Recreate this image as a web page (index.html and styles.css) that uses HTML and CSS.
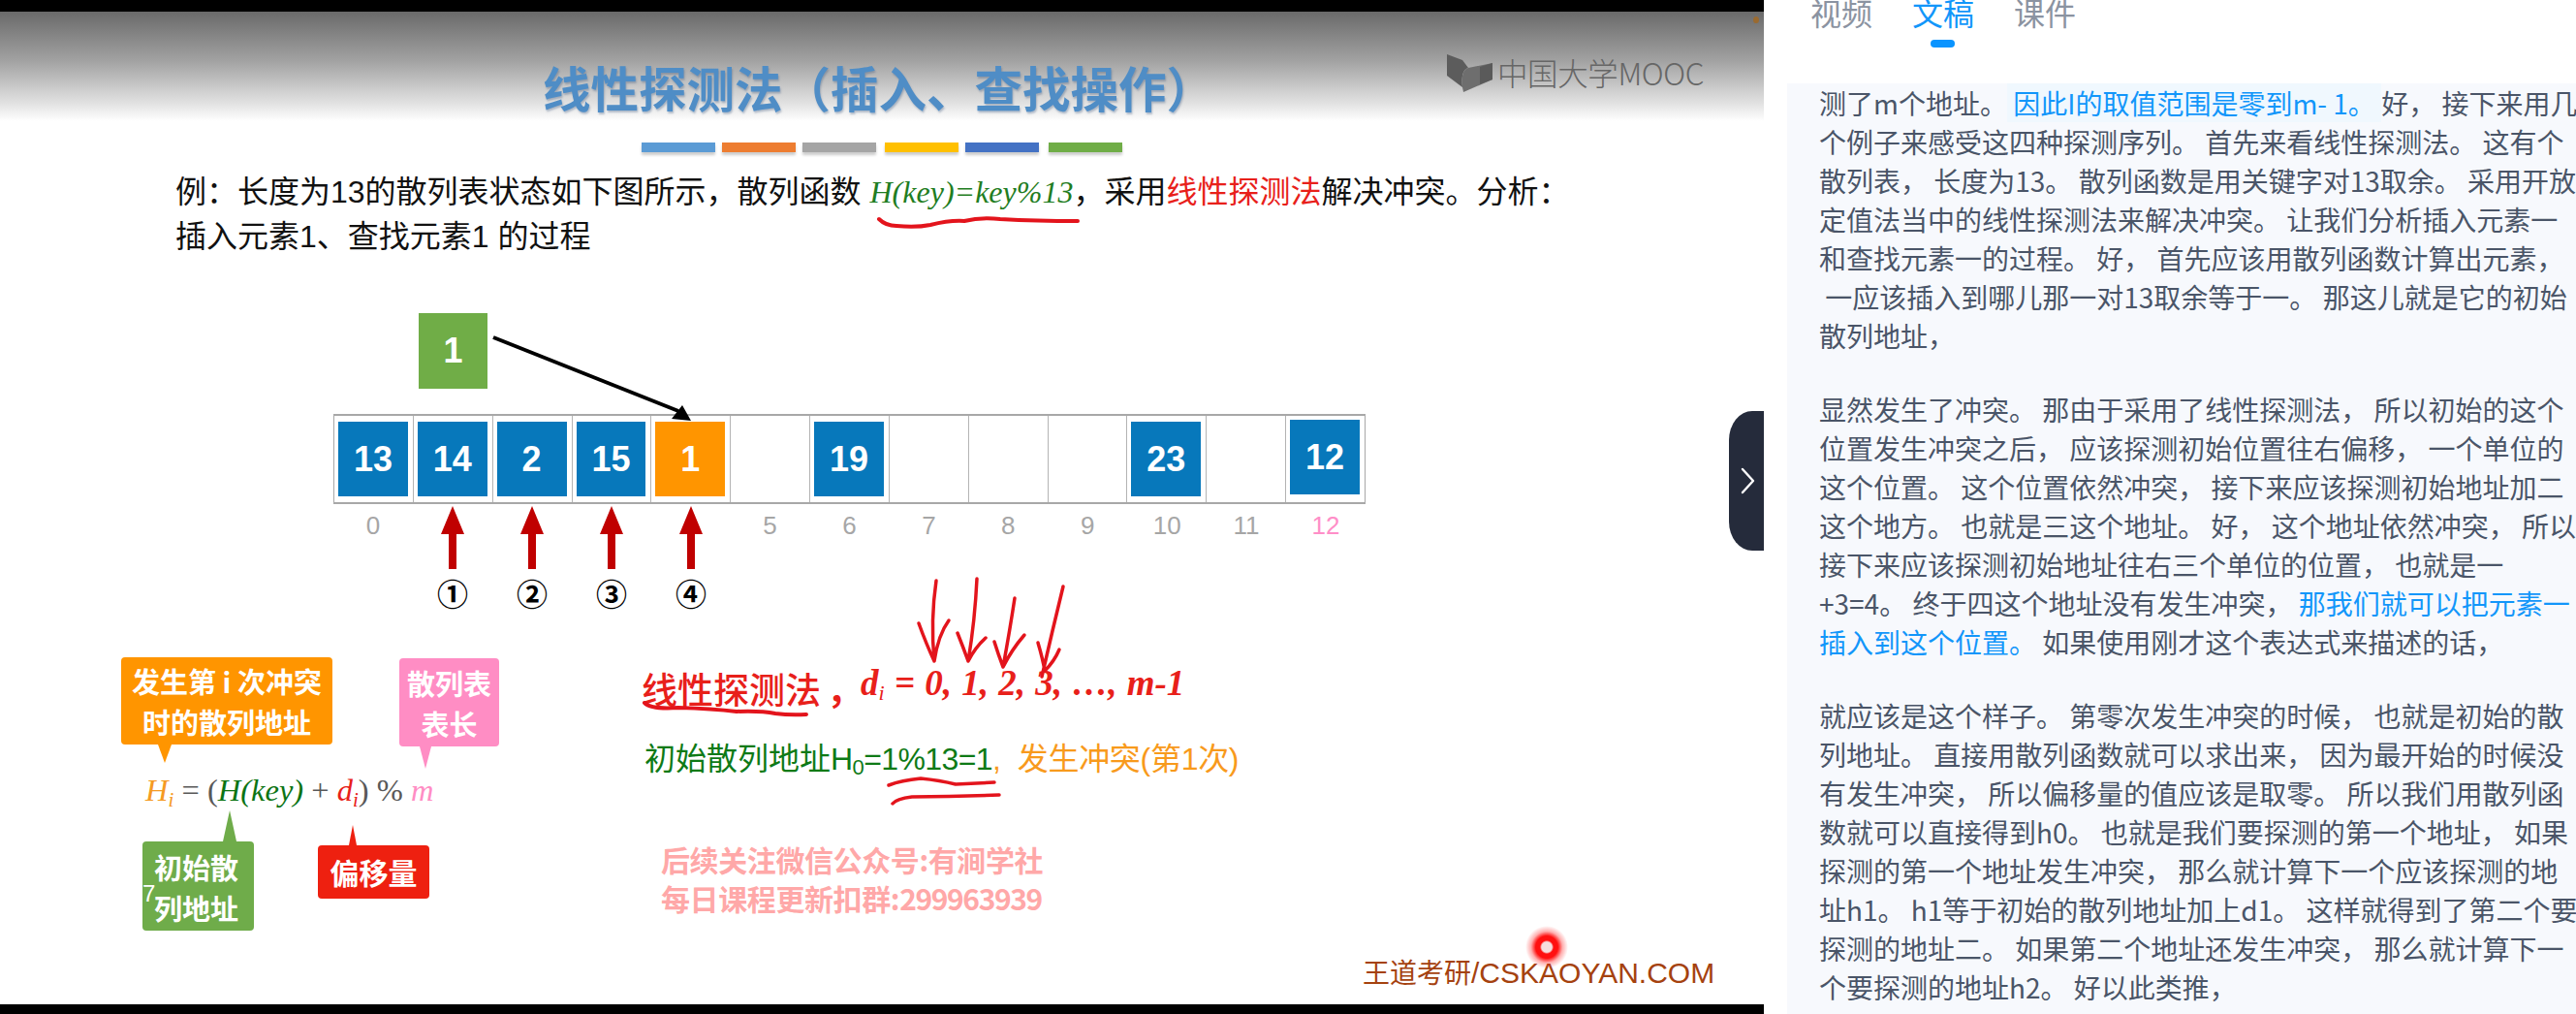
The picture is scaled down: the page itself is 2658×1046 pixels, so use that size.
FILE: index.html
```html
<!DOCTYPE html>
<html lang="zh-CN">
<head>
<meta charset="utf-8">
<title>线性探测法</title>
<link rel="stylesheet" href="styles.css">
</head>
<body>
<div class="app">
  <main class="video">
    <div class="slide">
      <div class="shade"></div>
      <span class="shade-dot"></span>
      <h1 class="title">线性探测法（插入、查找操作）</h1>
      <div class="logo">
        <svg class="logo-mark" width="48" height="40" viewBox="0 0 48 40"><path d="M0 0 L16 6 L22 14 Q14 16 16 34 L0 22Z" fill="#5c5c5c"/><path d="M47 9 L47 26 L17 39 L16 34 Q14 16 22 14 Z" fill="#6e6e6e"/><path d="M34 13 L47 9 L47 26 L34 31Z" fill="#5a5a5a"/></svg>
        <span class="logo-text">中国大学MOOC</span>
      </div>
      <div class="bars">
        <i class="bar bar-a"></i><i class="bar bar-b"></i><i class="bar bar-c"></i><i class="bar bar-d"></i><i class="bar bar-e"></i><i class="bar bar-f"></i>
      </div>
      <p class="task">例：长度为13的散列表状态如下图所示，散列函数 <em class="hash">H(key)=key%13</em>，采用<span class="red">线性探测法</span>解决冲突。分析：<br>插入元素1、查找元素1 的过程</p>

      <div class="key">1</div>
      <div class="table">
        <div class="cell"><b class="item blue">13</b></div>
        <div class="cell"><b class="item blue">14</b></div>
        <div class="cell"><b class="item blue">2</b></div>
        <div class="cell"><b class="item blue">15</b></div>
        <div class="cell"><b class="item orange">1</b></div>
        <div class="cell"></div>
        <div class="cell"><b class="item blue">19</b></div>
        <div class="cell"></div>
        <div class="cell"></div>
        <div class="cell"></div>
        <div class="cell"><b class="item blue">23</b></div>
        <div class="cell"></div>
        <div class="cell"><b class="item blue raised">12</b></div>
      </div>
      <div class="indices">
        <span>0</span><span></span><span></span><span></span><span></span><span>5</span><span>6</span><span>7</span><span>8</span><span>9</span><span>10</span><span>11</span><span class="pink-text">12</span>
      </div>
      <div class="probes">
        <span class="probe">①</span><span class="probe">②</span><span class="probe">③</span><span class="probe">④</span>
      </div>

      <div class="callout c-orange">发生第 i 次冲突<br>时的散列地址</div>
      <div class="callout c-pink">散列表<br>表长</div>
      <div class="formula"><i class="f-orange">H<span class="sub">i</span></i> = (<i class="f-green">H(key)</i> + <i class="f-red">d<span class="sub">i</span></i>) % <i class="f-pink">m</i></div>
      <div class="callout c-green">初始散<br>列地址<span class="stray">7</span></div>
      <div class="callout c-red">偏移量</div>

      <div class="method"><span class="method-name">线性探测法<span class="method-comma">，</span></span><b class="method-math">d<span class="sub">i</span> = 0, 1, 2, 3, …, m-1</b></div>
      <div class="initial"><span class="green">初始散列地址<span class="latin">H<span class="sub0">0</span>=1%13=1</span></span><span class="amber">,&nbsp;&nbsp;发生冲突(第1次)</span></div>
      <div class="promo">后续关注微信公众号:有涧学社<br>每日课程更新扣群:<span class="qq">299963939</span></div>
      <div class="mark"><span class="mark-cn">王道考研</span>/CSKAOYAN.COM</div>

      <svg class="ink" width="1820" height="1024" viewBox="0 12 1820 1024">
        <g fill="#c00000">
          <path d="M467 522 L479 551 L471 551 L471 587 L463 587 L463 551 L455 551Z"/>
          <path d="M549 522 L561 551 L553 551 L553 587 L545 587 L545 551 L537 551Z"/>
          <path d="M631 522 L643 551 L635 551 L635 587 L627 587 L627 551 L619 551Z"/>
          <path d="M713 522 L725 551 L717 551 L717 587 L709 587 L709 551 L701 551Z"/>
        </g>
        <path d="M509 348 L700 424" stroke="#000" stroke-width="4" fill="none"/>
        <path d="M713 434 L693 432 L704 418Z" fill="#000"/>
        <g fill="none" stroke="#e3141c" stroke-linecap="round" stroke-linejoin="round">
          <path stroke-width="4" d="M907 226 Q914 233 925 233 Q945 235 960 232 Q980 227 995 228 Q1012 224 1032 226 Q1070 228 1112 228"/>
          <path stroke-width="3.5" d="M966 599 Q960 640 964 682 M948 643 Q956 665 964 682 Q968 655 979 640"/>
          <path stroke-width="3.5" d="M1008 597 Q1006 640 999 682 M988 653 Q994 668 999 682 Q1006 668 1017 658"/>
          <path stroke-width="3.5" d="M1047 617 Q1042 650 1035 688 M1026 662 Q1030 675 1035 688 Q1044 670 1057 655"/>
          <path stroke-width="3.5" d="M1097 605 Q1086 650 1075 698 M1071 663 Q1076 680 1078 692 Q1088 682 1093 670"/>
          <path stroke-width="4" d="M665 725 Q672 732 700 730 Q735 731 760 734 Q785 733 800 736 Q815 738 832 737"/>
          <path stroke-width="3.5" d="M917 810 Q930 805 950 803 Q970 805 986 809 Q1005 808 1026 807"/>
          <path stroke-width="3.5" d="M921 829 Q925 824 941 822 Q985 822 1031 820"/>
        </g>
      </svg>
      <span class="pointer"></span>
    </div>
    <button class="handle" type="button" aria-label="收起">
      <svg width="16" height="28" viewBox="0 0 16 28"><path d="M2 2 L13 14 L2 26" fill="none" stroke="#fff" stroke-width="2.4" stroke-linecap="round" stroke-linejoin="round"/></svg>
    </button>
  </main>

  <aside class="panel">
    <nav class="tabs">
      <span class="tab">视频</span>
      <span class="tab active">文稿</span>
      <span class="tab">课件</span>
    </nav>
    <div class="transcript">
      <p>测了m个地址。<span class="hl now"> 因此I的取值范围是零到m- 1。 </span>好， 接下来用几<br>个例子来感受这四种探测序列。 首先来看线性探测法。 这有个<br>散列表， 长度为13。 散列函数是用关键字对13取余。 采用开放<br>定值法当中的线性探测法来解决冲突。 让我们分析插入元素一<br>和查找元素一的过程。 好， 首先应该用散列函数计算出元素，<br>&nbsp;一应该插入到哪儿那一对13取余等于一。 那这儿就是它的初始<br>散列地址，</p>
      <p>显然发生了冲突。 那由于采用了线性探测法， 所以初始的这个<br>位置发生冲突之后， 应该探测初始位置往右偏移， 一个单位的<br>这个位置。 这个位置依然冲突， 接下来应该探测初始地址加二<br>这个地方。 也就是三这个地址。 好， 这个地址依然冲突， 所以<br>接下来应该探测初始地址往右三个单位的位置， 也就是一<br>+3=4。 终于四这个地址没有发生冲突， <span class="hl">那我们就可以把元素一<br>插入到这个位置。</span> 如果使用刚才这个表达式来描述的话，</p>
      <p>就应该是这个样子。 第零次发生冲突的时候， 也就是初始的散<br>列地址。 直接用散列函数就可以求出来， 因为最开始的时候没<br>有发生冲突， 所以偏移量的值应该是取零。 所以我们用散列函<br>数就可以直接得到h0。 也就是我们要探测的第一个地址， 如果<br>探测的第一个地址发生冲突， 那么就计算下一个应该探测的地<br>址h1。 h1等于初始的散列地址加上d1。 这样就得到了第二个要<br>探测的地址二。 如果第二个地址还发生冲突， 那么就计算下一<br>个要探测的地址h2。 好以此类推，</p>
    </div>
  </aside>
</div>
</body>
</html>
```
FILE: styles.css
```css
* { box-sizing: border-box; }
html, body { margin: 0; height: 100%; overflow: hidden; background: #fff; }
body { font-family: "Liberation Sans", "Noto Sans CJK SC", sans-serif; }

.app { display: flex; width: 2658px; height: 1046px; }

/* video column */
.video { position: relative; flex: 0 0 1820px; height: 1046px; background: #000; padding: 12px 0 10px; }
.slide { position: relative; width: 100%; height: 1024px; background: #fff; overflow: hidden; }
.shade { height: 113px; background: linear-gradient(#6a6a6a, #a2a2a2 45%, #e4e4e4 85%, #fff); }
.shade-dot { position: absolute; left: 1809px; top: 5px; width: 6px; height: 7px; border-radius: 50%; background: #9a6a30; }

.title { position: absolute; left: 560px; top: 42px; margin: 0; font: 700 49.5px/71px "Noto Sans CJK SC", sans-serif; color: #4f8dc6; text-shadow: 1px 2px 2px rgba(60, 90, 130, .35); white-space: nowrap; }
.logo { position: absolute; left: 1493px; top: 44px; display: flex; align-items: center; gap: 4px; color: #666; }
.logo-text { font: 300 31.5px/38px "Noto Sans CJK SC", sans-serif; letter-spacing: -.4px; margin-top: -4px; white-space: nowrap; }

.bars { position: absolute; left: 662px; top: 135px; display: flex; gap: 7px; }
.bar { display: block; width: 76px; height: 10px; box-shadow: 0 3px 3px rgba(0, 0, 0, .2); }
.bar-a { background: #5b9bd5; }
.bar-b { background: #ed7d31; }
.bar-c { background: #a5a5a5; margin-right: 2px; }
.bar-d { background: #ffc000; }
.bar-e { background: #4472c4; }
.bar-f { background: #70ad47; margin-left: 3px; }

.task { position: absolute; left: 181px; top: 163px; margin: 0; font: 400 32px/46px "Liberation Sans", "Noto Sans CJK SC", sans-serif; color: #111; white-space: nowrap; }
.hash { font-family: "Liberation Serif", serif; color: #1f7d22; }
.red { color: #e8201a; }

/* hash table */
.key { position: absolute; left: 432px; top: 311px; display: flex; align-items: center; justify-content: center; width: 71px; height: 78px; background: #70ad47; color: #fff; font-weight: 700; font-size: 36px; }
.table { position: absolute; left: 344px; top: 415px; display: flex; width: 1065px; height: 93px; border: 2px solid #a8a8a8; border-left-width: 1px; border-right-width: 1px; }
.cell { position: relative; flex: 1 1 0; border-right: 1px solid #b4b4b4; padding: 6px 5px 0 4px; }
.cell:last-child { border-right: 0; }
.item { display: flex; align-items: center; justify-content: center; height: 77px; color: #fff; font-size: 36px; font-weight: 700; }
.blue { background: #0778bb; }
.orange { background: #ff9500; }
.raised { margin-top: -2px; }
.indices { position: absolute; left: 344px; top: 515px; display: flex; width: 1065px; color: #a6a6a6; font-size: 26px; line-height: 30px; text-align: center; }
.indices span { flex: 1 1 0; }
.pink-text { color: #ff8ec8; }
.probes { position: absolute; left: 426px; top: 578px; display: flex; }
.probe { width: 82px; text-align: center; font: 700 32px/42px "Noto Sans CJK SC", sans-serif; color: #000; }

/* callouts */
.callout { position: absolute; color: #fff; font: 700 29px/42px "Noto Sans CJK SC", sans-serif; text-align: center; border-radius: 4px; white-space: nowrap; }
.callout::after { content: ""; position: absolute; width: 0; height: 0; border-style: solid; }
.c-orange { left: 125px; top: 666px; width: 218px; height: 90px; padding-top: 3px; background: #ff9500; }
.c-orange::after { left: 38px; top: 90px; border-width: 19px 7px 0; border-color: #ff9500 transparent transparent; }
.c-pink { left: 412px; top: 667px; width: 103px; height: 91px; padding-top: 4px; background: #ff8dc4; }
.c-pink::after { left: 21px; top: 91px; border-width: 23px 6px 0; border-color: #ff8dc4 transparent transparent; }
.c-green { left: 147px; top: 856px; width: 115px; height: 92px; padding: 5px 4px 0 0; background: #6fac4a; }
.c-green::after { left: 83px; top: -32px; border-width: 0 7.5px 32px; border-color: transparent transparent #6fac4a; }
.stray { position: absolute; left: 0; top: 42px; font: 400 24px/24px "Liberation Sans", sans-serif; }
.c-red { left: 328px; top: 860px; width: 115px; height: 55px; background: #ee2010; font-size: 30px; line-height: 55px; }
.c-red::after { left: 32px; top: -21px; border-width: 0 4.5px 21px; border-color: transparent transparent #ee2010; }

.formula { position: absolute; left: 150px; top: 782px; font: 400 32.5px/42px "Liberation Serif", serif; color: #595959; white-space: nowrap; }
.formula .sub { font-size: 21px; vertical-align: -6px; }
.f-orange { color: #f59a23; }
.f-green { color: #0c7414; }
.f-red { color: #e8201a; }
.f-pink { color: #ff8dc4; }

/* notes */
.method { position: absolute; left: 662px; top: 664px; display: flex; align-items: center; color: #e8201a; white-space: nowrap; }
.method-name { font: 500 37px/58px "Noto Sans CJK SC", sans-serif; width: 226px; white-space: nowrap; }
.method-comma { margin-left: 6px; font-weight: 700; }
.method-math { font: italic 700 37px/58px "Liberation Serif", serif; word-spacing: 1px; }
.method-math .sub { font-size: 22px; font-weight: 400; vertical-align: -5px; }
.initial { position: absolute; left: 665px; top: 748px; font: 400 32px/46px "Liberation Sans", "Noto Sans CJK SC", sans-serif; white-space: nowrap; }
.green { color: #0e7a16; }
.latin { letter-spacing: -.6px; }
.amber { color: #f89a1c; letter-spacing: -.3px; }
.sub0 { font-size: 22px; vertical-align: -5px; }
.promo { position: absolute; left: 682px; top: 854px; font: 700 30px/40px "Noto Sans CJK SC", sans-serif; color: #ffa8a8; white-space: nowrap; letter-spacing: -.4px; }
.qq { letter-spacing: -1.4px; }
.mark { position: absolute; left: 1406px; top: 970px; font: 400 30px/40px "Liberation Sans", sans-serif; color: #a5420f; white-space: nowrap; }
.mark-cn { font: 400 28px/40px "Noto Sans CJK SC", sans-serif; }

.ink { position: absolute; left: 0; top: 0; pointer-events: none; }
.pointer { position: absolute; left: 1574px; top: 943px; width: 44px; height: 44px; border-radius: 50%; background: radial-gradient(circle closest-side, #f6dede 0, #f6dede 24%, #ff1010 32%, #ff1010 52%, rgba(255, 30, 30, .35) 74%, rgba(255, 60, 60, 0) 100%); }

.handle { position: absolute; right: 0; top: 424px; display: flex; align-items: center; justify-content: center; width: 36px; height: 144px; padding: 0 0 0 3px; border: 0; border-radius: 24px 0 0 24px / 30px 0 0 30px; background: #252b3b; }

/* side panel */
.panel { flex: 1 1 0; min-width: 0; height: 1046px; overflow: hidden; background: #fff; font-family: "Noto Sans CJK SC", sans-serif; }
.tabs { display: flex; gap: 41px; height: 86px; padding-left: 48px; }
.tab { position: relative; height: 30px; margin-top: -3px; font-size: 32px; line-height: 30px; color: #8b93a1; }
.tab.active { color: #1296fa; }
.tab.active::after { content: ""; position: absolute; left: 19px; top: 44px; width: 25px; height: 8px; border-radius: 4px; background: #0a94ff; }
.transcript { margin-left: 24px; height: 960px; padding-left: 33px; background: #f7f9fd; overflow: hidden; color: #4a5568; font-size: 28px; line-height: 40px; white-space: nowrap; }
.transcript p { margin: 0 0 36px; }
.hl { color: #1296fa; }
.now { background: #f0f8fe; }
```
